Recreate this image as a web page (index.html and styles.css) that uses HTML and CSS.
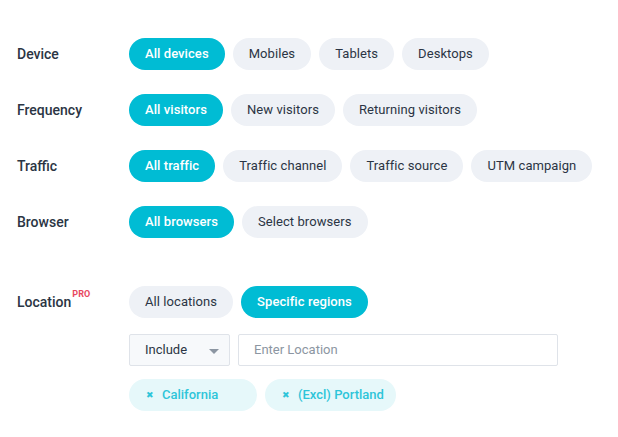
FILE: index.html
```html
<!DOCTYPE html>
<html>
<head>
<meta charset="utf-8">
<link rel="stylesheet" href="styles.css">
</head>
<body>
<div class="panel">
  <div class="row">
    <div class="label">Device</div>
    <div class="pills">
      <span class="pill active">All devices</span>
      <span class="pill">Mobiles</span>
      <span class="pill">Tablets</span>
      <span class="pill">Desktops</span>
    </div>
  </div>
  <div class="row">
    <div class="label">Frequency</div>
    <div class="pills">
      <span class="pill active">All visitors</span>
      <span class="pill">New visitors</span>
      <span class="pill">Returning visitors</span>
    </div>
  </div>
  <div class="row">
    <div class="label">Traffic</div>
    <div class="pills">
      <span class="pill active">All traffic</span>
      <span class="pill">Traffic channel</span>
      <span class="pill">Traffic source</span>
      <span class="pill">UTM campaign</span>
    </div>
  </div>
  <div class="row">
    <div class="label">Browser</div>
    <div class="pills">
      <span class="pill active">All browsers</span>
      <span class="pill">Select browsers</span>
    </div>
  </div>
  <div class="row location">
    <div class="label">Location<sup class="pro">PRO</sup></div>
    <div class="loc-body">
      <div class="pills">
        <span class="pill">All locations</span>
        <span class="pill active">Specific regions</span>
      </div>
      <div class="controls">
        <div class="select">
          <span>Include</span>
          <span class="caret"></span>
        </div>
        <div class="input">Enter Location</div>
      </div>
      <div class="tags">
        <span class="tag"><span class="x">&#x2716;</span>California</span>
        <span class="tag"><span class="x">&#x2716;</span>(Excl) Portland</span>
      </div>
    </div>
  </div>
</div>
</body>
</html>
```
FILE: styles.css
```css
html, body {
  margin: 0;
  padding: 0;
  background: #ffffff;
}
body {
  font-family: Roboto, "Liberation Sans", sans-serif;
  color: #2b3544;
}
.panel {
  padding: 38px 0 0 17px;
  display: flex;
  flex-direction: column;
  gap: 24px;
}
.row {
  display: flex;
  align-items: flex-start;
}
.row.location {
  margin-top: 24px;
}
.label {
  width: 112px;
  flex: none;
  font-size: 14px;
  font-weight: 500;
  line-height: 32px;
  color: #2b3544;
}
.pro {
  font-size: 9px;
  font-weight: 700;
  color: #e8485f;
  vertical-align: top;
  line-height: 9px;
  position: relative;
  top: 4px;
  margin-left: 1px;
}
.pills {
  display: flex;
  gap: 8px;
}
.pill {
  height: 32px;
  line-height: 32px;
  padding: 0 16px;
  border-radius: 16px;
  background: #eef1f6;
  font-size: 13px;
  letter-spacing: 0.07px;
  color: #2b3544;
  white-space: nowrap;
}
.pill.active {
  background: #00bcd4;
  color: #ffffff;
  font-weight: 500;
}
.loc-body {
  display: flex;
  flex-direction: column;
}
.controls {
  display: flex;
  gap: 8px;
  margin-top: 16px;
}
.select {
  box-sizing: border-box;
  width: 101px;
  height: 32px;
  border: 1px solid #dfe3e9;
  border-radius: 2px;
  background: #f7f9fb;
  display: flex;
  align-items: center;
  justify-content: space-between;
  padding: 0 10px 0 15px;
  font-size: 13px;
  color: #2b3544;
}
.select span:first-child {
  margin-top: -1px;
}
.caret {
  width: 0;
  height: 0;
  border-left: 5px solid transparent;
  border-right: 5px solid transparent;
  border-top: 5px solid #8c96a2;
  margin-top: 2px;
}
.input {
  box-sizing: border-box;
  width: 320px;
  height: 32px;
  border: 1px solid #dfe3e9;
  border-radius: 2px;
  background: #ffffff;
  padding-left: 15px;
  line-height: 29px;
  font-size: 13px;
  color: #8c96a2;
}
.tags {
  display: flex;
  gap: 8px;
  margin-top: 13px;
}
.tag {
  box-sizing: border-box;
  min-width: 128px;
  height: 32px;
  line-height: 32px;
  padding: 0 12px 0 17px;
  border-radius: 16px;
  background: #e6f8fa;
  color: #2ec5d9;
  font-size: 13px;
  font-weight: 500;
  white-space: nowrap;
}
.tag .x {
  font-size: 9px;
  margin-right: 8px;
  position: relative;
  top: -1px;
}
```
